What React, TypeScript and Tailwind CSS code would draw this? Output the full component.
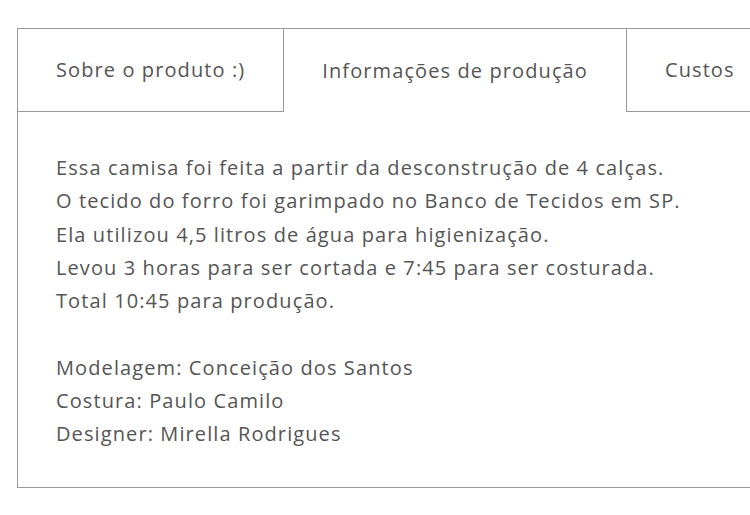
import React from 'react';

const tabs = ['Sobre o produto :)', 'Informações de produção', 'Custos'];

const lines = [
  'Essa camisa foi feita a partir da desconstrução de 4 calças.',
  'O tecido do forro foi garimpado no Banco de Tecidos em SP.',
  'Ela utilizou 4,5 litros de água para higienização.',
  'Levou 3 horas para ser cortada e 7:45 para ser costurada.',
  'Total 10:45 para produção.',
];

const credits = [
  'Modelagem: Conceição dos Santos',
  'Costura: Paulo Camilo',
  'Designer: Mirella Rodrigues',
];

export default function App() {
  const active = 1;

  return (
    <div className="w-[750px] h-[515px] overflow-hidden bg-white text-[#555] font-['Open_Sans','Lato',sans-serif] tracking-[1.1px]">
      <div className="ml-[17px] mt-[28px] w-[780px] border-l border-t border-b border-[#9a9a9a]">
        <div className="flex h-[83px]">
          {tabs.map((t, i) => (
            <div
              key={t}
              className={
                i === active
                  ? 'flex items-center px-[38px] text-[20px]'
                  : i === 0
                  ? 'flex items-center px-[38px] text-[20px] border-r border-b border-[#9a9a9a]'
                  : 'flex flex-1 items-center px-[38px] text-[20px] border-l border-b border-[#9a9a9a]'
              }
            >
              {t}
            </div>
          ))}
        </div>
        <div className="pl-[38px] pt-[39px] pb-[37px] text-[20px] leading-[33.25px]">
          {lines.map((l) => (
            <p key={l}>{l}</p>
          ))}
          <p>&nbsp;</p>
          {credits.map((l) => (
            <p key={l}>{l}</p>
          ))}
        </div>
      </div>
    </div>
  );
}
